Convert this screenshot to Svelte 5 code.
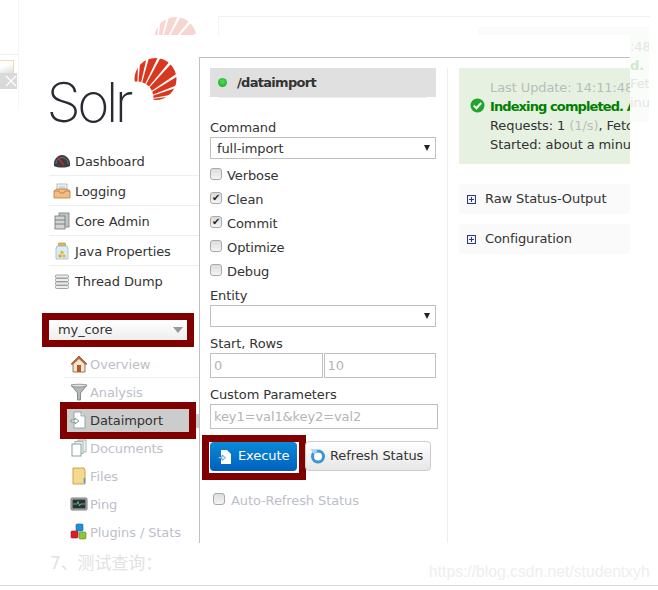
<script>
	const mainNav = [
		{ label: "Dashboard", icon: "gauge" },
		{ label: "Logging", icon: "inbox" },
		{ label: "Core Admin", icon: "servers" },
		{ label: "Java Properties", icon: "jar" },
		{ label: "Thread Dump", icon: "stack" },
	];
	const coreNav = [
		{ label: "Overview", icon: "house" },
		{ label: "Analysis", icon: "funnel" },
		{ label: "Dataimport", icon: "docarrow", active: true },
		{ label: "Documents", icon: "docs" },
		{ label: "Files", icon: "folder" },
		{ label: "Ping", icon: "monitor" },
		{ label: "Plugins / Stats", icon: "blocks" },
	];
	const options = [
		{ label: "Verbose", checked: false },
		{ label: "Clean", checked: true },
		{ label: "Commit", checked: true },
		{ label: "Optimize", checked: false },
		{ label: "Debug", checked: false },
	];

	// sun rays fan out from one point low on the left
	const rays = [87, 76, 63, 49, 33, 20, 9].map((deg) => {
		const point = (a) => {
			const r = (a * Math.PI) / 180;
			return `${137 + 52 * Math.cos(r)} ${100 - 52 * Math.sin(r)}`;
		};
		return `M137 100 L${point(deg + 1.5)} L${point(deg - 1.5)} Z`;
	});
</script>

{#snippet sun()}
	<svg class="sun" width="44" height="44" viewBox="134 56 44 44" aria-hidden="true">
		<circle cx="155.5" cy="78" r="21" fill="#d9381e" />
		<circle cx="137" cy="97" r="16.5" fill="#fff" />
		{#each rays as d}
			<path {d} fill="#fff" />
		{/each}
	</svg>
{/snippet}

{#snippet icon(name)}
	<svg class="icon" width="18" height="18" viewBox="0 0 18 18" aria-hidden="true">
		{#if name === "gauge"}
			<path d="M1 14 C0 7 5 3 9 3 C13 3 18 7 17 14 C13 16 5 16 1 14 Z" fill="#3a3d42" />
			<path d="M3 12 C3 8 6 5.5 9 5.5 C12 5.5 15 8 15 12" fill="none" stroke="#777" stroke-width="1" />
			<line x1="5" y1="6" x2="11" y2="13" stroke="#d8262c" stroke-width="1.2" />
		{:else if name === "inbox"}
			<rect x="4" y="2" width="10" height="9" fill="#eef3f6" stroke="#9fb2bf" stroke-width="0.8" />
			<line x1="6" y1="5" x2="12" y2="5" stroke="#9fb2bf" stroke-width="0.8" />
			<line x1="6" y1="7" x2="12" y2="7" stroke="#9fb2bf" stroke-width="0.8" />
			<path d="M1 9 L4 7 L14 7 L17 9 L17 16 L1 16 Z" fill="#f0bd85" stroke="#bd7a3d" stroke-width="0.8" />
			<path d="M1 9 L6 9 L7 11 L11 11 L12 9 L17 9" fill="none" stroke="#bd7a3d" stroke-width="0.8" />
		{:else if name === "servers"}
			<rect x="6" y="1" width="10" height="14" fill="#bfc4c4" stroke="#777d7d" stroke-width="0.8" />
			<rect x="2" y="4" width="10" height="13" fill="#d2d5d3" stroke="#6f7573" stroke-width="0.8" />
			<line x1="2" y1="8" x2="12" y2="8" stroke="#6f7573" stroke-width="0.9" />
			<line x1="2" y1="12" x2="12" y2="12" stroke="#6f7573" stroke-width="0.9" />
		{:else if name === "jar"}
			<rect x="5.5" y="1" width="7" height="3" rx="0.5" fill="#e0b85c" stroke="#a9893f" stroke-width="0.6" />
			<path d="M4 4 L14 4 L15 7 L15 17 L3 17 L3 7 Z" fill="#dcecf5" stroke="#9db9c9" stroke-width="0.8" />
			<circle cx="9" cy="10.5" r="1.8" fill="#e1b84f" />
			<circle cx="7" cy="14" r="1.8" fill="#d9a93c" />
			<circle cx="11" cy="14" r="1.8" fill="#e1b84f" />
		{:else if name === "stack"}
			{#each [3, 6.5, 10, 13.5] as y}
				<rect x="2.5" {y} width="13" height="3" rx="1" fill="#eceeec" stroke="#8d918e" stroke-width="0.8" />
			{/each}
		{:else if name === "house"}
			<path d="M9 1 L17 9 L15 9 L15 17 L3 17 L3 9 L1 9 Z" fill="#f2e6d3" stroke="#8a6a4c" stroke-width="0.9" />
			<path d="M9 1 L17 9 L15 9.5 L9 4 L3 9.5 L1 9 Z" fill="#b5653c" />
			<rect x="7" y="10" width="4" height="7" fill="#b8581f" />
		{:else if name === "funnel"}
			<path d="M1 2 L17 2 L10.5 10 L10.5 17 L7.5 17 L7.5 10 Z" fill="#b4b8b6" stroke="#74797a" stroke-width="0.8" />
			<ellipse cx="9" cy="2.6" rx="8" ry="1.4" fill="#dfe2e0" stroke="#74797a" stroke-width="0.6" />
		{:else if name === "docarrow"}
			<path d="M4 1 L11 1 L15 5 L15 17 L4 17 Z" fill="#fff" stroke="#87a39c" stroke-width="0.9" />
			<path d="M11 1 L11 5 L15 5" fill="#dbe7e3" stroke="#87a39c" stroke-width="0.8" />
			<path d="M1 9 L5 9 L5 7 L9 10 L5 13 L5 11 L1 11 Z" fill="#f4f7f5" stroke="#6d8a83" stroke-width="0.8" />
		{:else if name === "docs"}
			<rect x="8" y="1" width="8" height="12" fill="#eef3f1" stroke="#93a6a1" stroke-width="0.8" />
			<rect x="5" y="2.5" width="8" height="12" fill="#f3f7f5" stroke="#93a6a1" stroke-width="0.8" />
			<rect x="2" y="5" width="9" height="12" fill="#fff" stroke="#7f9791" stroke-width="0.9" />
		{:else if name === "folder"}
			<path d="M3 1 L14 1 L15 3 L15 17 L3 17 Z" fill="#f6d98f" stroke="#c49b47" stroke-width="0.9" />
			<path d="M14.5 11 L14.5 16" stroke="#4a9bd8" stroke-width="1.6" />
		{:else if name === "monitor"}
			<rect x="1" y="3" width="16" height="12" rx="1" fill="#b9bcbc" stroke="#6e7272" stroke-width="0.9" />
			<rect x="2.5" y="4.5" width="13" height="9" fill="#2c3133" />
			<path d="M3 9 L7 9 L8 6.5 L9.5 11 L10.5 9 L15 9" fill="none" stroke="#5ed0a0" stroke-width="0.8" />
		{:else if name === "blocks"}
			<rect x="6" y="1" width="7" height="7" rx="1" fill="#1e92d6" stroke="#13669b" stroke-width="0.6" />
			<rect x="1" y="8" width="7" height="7" rx="1" fill="#e0192c" stroke="#98101d" stroke-width="0.6" />
			<rect x="9" y="9" width="7" height="7" rx="1" fill="#8cc63f" stroke="#5d8a25" stroke-width="0.6" />
		{/if}
	</svg>
{/snippet}

{#snippet plus()}
	<svg width="9" height="9" viewBox="0 0 9 9" aria-hidden="true">
		<rect x="0.5" y="0.5" width="8" height="8" fill="#f2f4fa" stroke="#2c3c78" />
		<path d="M2 4.5 H7 M4.5 2 V7" stroke="#2c3c78" />
	</svg>
{/snippet}

<div class="page">
	<div class="ghost ghost-left">
		<div class="ghost-rule"></div>
		<div class="ghost-thumb"></div>
		<div class="ghost-close">
			<svg width="12" height="12" viewBox="0 0 12 12" aria-hidden="true">
				<path d="M1 1 L11 11 M11 1 L1 11" stroke="#fff" stroke-width="1.2" />
			</svg>
		</div>
	</div>
	<div class="ghost ghost-sun">{@render sun()}</div>
	<div class="ghost ghost-top"></div>
	<div class="ghost ghost-band"></div>
	<div class="ghost ghost-right">
		<span>:48</span>
		<b>d. A</b>
		<span>Fetc</span>
		<span>inut</span>
	</div>

	<div class="shot">
		<aside class="sidebar">
			<div class="logo">
				{@render sun()}
				<span class="wordmark">Solr</span>
			</div>

			<ul class="nav">
				{#each mainNav as item}
					<li>{@render icon(item.icon)}<span>{item.label}</span></li>
				{/each}
			</ul>

			<div class="core-frame marked">
				<div class="core-select">
					<span>my_core</span>
					<i class="core-arrow"></i>
				</div>
			</div>

			<ul class="nav core-nav">
				{#each coreNav as item}
					<li class:active={item.active}>
						<div class="core-item" class:marked={item.active}>
							{@render icon(item.icon)}<span>{item.label}</span>
						</div>
					</li>
				{/each}
			</ul>
		</aside>

		<main class="panel">
			<section class="form">
				<h2><i class="dot"></i>/dataimport</h2>

				<label class="field-label" for="command">Command</label>
				<div class="select-wrap">
					<select id="command"><option>full-import</option></select>
				</div>

				<div class="options">
					{#each options as opt}
						<label class="check"><input type="checkbox" checked={opt.checked} />{opt.label}</label>
					{/each}
				</div>

				<label class="field-label entity" for="entity">Entity</label>
				<div class="select-wrap">
					<select id="entity"><option></option></select>
				</div>

				<label class="field-label start" for="start">Start, Rows</label>
				<div class="rows">
					<input id="start" placeholder="0" />
					<input placeholder="10" />
				</div>

				<label class="field-label custom" for="custom">Custom Parameters</label>
				<input id="custom" class="custom-input" placeholder="key1=val1&key2=val2" />

				<div class="buttons">
					<div class="exec-frame marked">
						<button type="button" class="btn primary">
							<svg width="14" height="16" viewBox="0 0 14 16" aria-hidden="true">
								<path d="M3 1 L9 1 L13 5 L13 15 L3 15 Z" fill="#fff" />
								<path d="M0.5 8 L4 8 L4 6 L7.5 8.7 L4 11.5 L4 9.5 L0.5 9.5 Z" fill="#dbe9f5" stroke="#1b6fb8" stroke-width="0.6" />
							</svg>
							<span>Execute</span>
						</button>
					</div>
					<button type="button" class="btn refresh">
						<svg width="16" height="16" viewBox="0 0 16 16" aria-hidden="true">
							<circle cx="8" cy="8.5" r="5.5" fill="#fff" stroke="#3a94d8" stroke-width="3" />
							<path d="M0.5 1 L8 1.5 L4.5 7 Z" fill="#a8d2ef" />
						</svg>
						<span>Refresh Status</span>
					</button>
				</div>

				<label class="check auto"><input type="checkbox" />Auto-Refresh Status</label>
			</section>

			<section class="status">
				<div class="message">
					<svg class="ok" width="15" height="15" viewBox="0 0 15 15" aria-hidden="true">
						<circle cx="7.5" cy="7.5" r="7" fill="#22a52c" />
						<path d="M3.8 7.6 L6.4 10.2 L11.2 5" fill="none" stroke="#fff" stroke-width="2" />
					</svg>
					<p class="muted">Last Update: 14:11:48</p>
					<p class="done">Indexing completed. Added/Updated: 1 documents.</p>
					<p>Requests: 1 <span class="muted">(1/s)</span>, Fetched: 1 <span class="muted">(1/s)</span></p>
					<p>Started: about a minute ago</p>
				</div>

				<div class="fold">{@render plus()}<span>Raw Status-Output</span></div>
				<div class="fold">{@render plus()}<span>Configuration</span></div>
			</section>
		</main>
	</div>

	<p class="after">7、测试查询：</p>
	<span class="watermark">https://blog.csdn.net/studentxyh</span>
</div>

<style>
	:global(body) {
		margin: 0;
		background: #fff;
	}

	.page {
		position: relative;
		width: 658px;
		height: 590px;
		overflow: hidden;
		background: #fff;
		font-family: "DejaVu Sans", Verdana, sans-serif;
		font-size: 13px;
		letter-spacing: -0.1px;
		color: #333;
	}

	.ghost {
		position: absolute;
	}

	.ghost-left {
		left: 0;
		top: 0;
		width: 18px;
		height: 110px;
		border-right: 1px solid #f5f5f5;
	}

	.ghost-rule {
		position: absolute;
		left: 0;
		right: 0;
		top: 54px;
		border-top: 1px solid #eee;
	}

	.ghost-thumb {
		position: absolute;
		left: 0;
		top: 60px;
		width: 13px;
		height: 16px;
		border: 1px solid #f5d9b0;
		border-left: 0;
		background: linear-gradient(160deg, #fff 30%, #c9d6cf);
	}

	.ghost-close {
		position: absolute;
		left: 0;
		top: 73px;
		width: 17px;
		height: 16px;
		background: #d9d9d9;
		display: flex;
		align-items: center;
		justify-content: flex-end;
	}

	.ghost-sun {
		left: 154px;
		top: 16px;
		height: 19px;
		overflow: hidden;
		opacity: 0.2;
	}

	.ghost-top {
		left: 218px;
		top: 16px;
		width: 431px;
		height: 19px;
		border-top: 1px solid #f0f0f0;
		border-left: 1px solid #f5f5f5;
	}

	.ghost-band {
		left: 478px;
		top: 27px;
		width: 171px;
		height: 8px;
		background: #fafcf9;
	}

	.ghost-right {
		left: 630px;
		top: 27px;
		width: 19px;
		height: 95px;
		background: #fafcf9;
		overflow: hidden;
		white-space: nowrap;
		color: #e4e4e4;
		display: flex;
		flex-direction: column;
		padding-top: 11px;
		line-height: 18.6px;
		box-sizing: border-box;
	}

	.ghost-right b {
		color: #d0e8cc;
	}

	.shot {
		display: flex;
		padding: 57px 0 0 49px;
	}

	.sidebar {
		width: 150px;
		flex: none;
	}

	.logo {
		position: relative;
		height: 89px;
	}

	.wordmark {
		position: absolute;
		left: -2.5px;
		top: 12px;
		font-family: Inter, Lato, sans-serif;
		font-weight: 200;
		font-size: 55px;
		line-height: 66px;
		letter-spacing: -3.5px;
		color: #2b2a33;
	}

	.logo .sun {
		position: absolute;
		left: 85px;
		top: 0;
	}

	.sun {
		display: block;
	}

	.nav {
		list-style: none;
		margin: 0;
		padding: 0;
	}

	.nav li {
		height: 30px;
		display: flex;
		align-items: center;
		gap: 4px;
		padding-left: 4px;
		border-bottom: 1px solid #eee;
		box-sizing: border-box;
	}

	.nav li:last-child {
		border-bottom-color: transparent;
	}

	.nav li span {
		position: relative;
		top: 1px;
	}

	.icon {
		flex: none;
	}

	.core-frame {
		margin-top: 24px;
		width: 138px;
		height: 20px;
	}

	.core-select {
		height: 100%;
		box-sizing: border-box;
		display: flex;
		align-items: center;
		justify-content: space-between;
		padding: 0 2px 2px 9px;
		border-radius: 3px;
		background: linear-gradient(#fff, #eee);
	}

	.core-arrow {
		width: 0;
		height: 0;
		margin: 2px 2px 0 0;
		border: 5px solid transparent;
		border-top: 6px solid #999;
		border-bottom: 0;
	}

	.marked {
		outline: 7px solid #800000;
	}

	.core-nav {
		margin: 10px 0 0 15px;
	}

	.core-nav li {
		position: relative;
		height: 28px;
		color: #bcc0c8;
		padding-left: 0;
		border-bottom: 0;
	}

	.core-nav li span {
		top: 0;
	}

	.core-nav li:first-child {
		border-bottom: 1px solid #eee;
	}

	.core-nav li:first-child span {
		top: 1px;
	}

	.core-item {
		display: flex;
		align-items: center;
		gap: 2px;
		width: 100%;
		height: 23px;
		box-sizing: border-box;
		padding-left: 6px;
	}

	.core-nav li.active {
		color: #333;
	}

	.core-nav li.active .core-item {
		width: 122px;
		margin-left: 3px;
		flex: none;
		padding-left: 3px;
		background: #ccc;
	}

	.core-nav li.active::after {
		content: "";
		position: absolute;
		right: 0;
		top: 8px;
		bottom: 6px;
		width: 3px;
		background: #ccc;
	}

	.panel {
		width: 431px;
		height: 486px;
		flex: none;
		box-sizing: border-box;
		display: flex;
		padding: 10px 0 0 10px;
		border-top: 1px solid #c0c0c0;
		border-left: 1px solid #c0c0c0;
		background: #fff;
	}

	.form {
		width: 238px;
		height: 100%;
		flex: none;
		box-sizing: border-box;
		padding-right: 11px;
		border-right: 1px solid #eee;
		display: flex;
		flex-direction: column;
	}

	h2 {
		margin: 0;
		height: 29px;
		background: #e0e0e0;
		display: flex;
		align-items: center;
		font-size: 13px;
		letter-spacing: -0.7px;
		color: #333;
		box-shadow: 0 10px 0 -9px #eee;
	}

	.dot {
		width: 9px;
		height: 9px;
		margin: 0 10px 0 8px;
		border-radius: 50%;
		background: radial-gradient(circle at 50% 40%, #4fdc55, #16a01e);
	}

	.field-label {
		height: 15px;
		line-height: 15px;
	}

	h2 + .field-label {
		margin-top: 23px;
	}

	.select-wrap {
		position: relative;
		margin-top: 2px;
	}

	.select-wrap::after {
		content: "";
		position: absolute;
		right: 6px;
		top: 8px;
		border: 3.5px solid transparent;
		border-top: 6px solid #222;
		border-bottom: 0;
	}

	select {
		appearance: none;
		display: block;
		width: 100%;
		height: 22px;
		padding: 0 6px;
		box-sizing: border-box;
		border: 1px solid #c0c0c0;
		border-radius: 0;
		background: #fff;
		font: inherit;
		letter-spacing: inherit;
		color: #333;
	}

	.options {
		margin-top: 5px;
		display: flex;
		flex-direction: column;
	}

	.check {
		height: 24px;
		display: flex;
		align-items: center;
		gap: 5px;
		line-height: 24px;
	}

	input[type="checkbox"] {
		appearance: none;
		position: relative;
		top: -2px;
		width: 12px;
		height: 12px;
		margin: 0;
		border: 1px solid #a9a9a9;
		border-radius: 3px;
		background: linear-gradient(#dcdcdc, #f5f5f5);
		flex: none;
	}

	input[type="checkbox"]:checked::after {
		content: "✔";
		position: absolute;
		left: 1px;
		top: -2px;
		font-size: 10px;
		line-height: 13px;
		color: #222;
	}

	.entity {
		margin-top: 4px;
	}

	.start {
		margin-top: 9px;
	}

	.rows {
		display: flex;
		gap: 1px;
		margin-top: 2px;
	}

	.rows input,
	.custom-input {
		height: 25px;
		min-width: 0;
		flex: 1;
		box-sizing: border-box;
		padding: 0 3px;
		border: 1px solid #c0c0c0;
		font: inherit;
		letter-spacing: inherit;
		outline: none;
	}

	input::placeholder {
		color: #b5b5b5;
		opacity: 1;
	}

	.custom {
		margin-top: 9px;
	}

	.custom-input {
		flex: none;
		width: 228px;
		margin-top: 2px;
	}

	.buttons {
		display: flex;
		align-items: flex-start;
		gap: 6px;
		margin-top: 12px;
	}

	.exec-frame {
		width: 90px;
		height: 31px;
		margin: 1px 0 0 -1px;
		padding-left: 1px;
		box-sizing: border-box;
	}

	.btn {
		height: 30px;
		display: flex;
		align-items: center;
		box-sizing: border-box;
		border: 1px solid #ccc;
		border-radius: 4px;
		background: linear-gradient(#fff, #e6e6e6);
		font: inherit;
		letter-spacing: inherit;
		color: #333;
	}

	.btn span {
		position: relative;
		top: -1px;
	}

	.refresh {
		width: 126px;
		gap: 4px;
		padding: 0 0 0 4px;
		flex: none;
	}

	.primary {
		width: 87px;
		height: 29px;
		padding: 0 0 0 8px;
		gap: 6px;
		border: 0;
		color: #fff;
		background: linear-gradient(#0a8ad8, #0060bd);
	}

	.auto {
		margin: 16px 0 0 3px;
		gap: 6px;
		color: #bcc0c8;
	}

	.status {
		width: 171px;
		margin-left: 11px;
		flex: none;
		display: flex;
		flex-direction: column;
	}

	.message {
		position: relative;
		height: 96px;
		padding: 10px 0 0 31px;
		box-sizing: border-box;
		background: #e6f1e1;
		overflow: hidden;
		white-space: nowrap;
	}

	.message p {
		margin: 0;
		line-height: 19px;
	}

	.ok {
		position: absolute;
		left: 11px;
		top: 30px;
	}

	.muted {
		color: #b9bdb9;
	}

	.done {
		color: #008000;
		font-weight: 700;
		letter-spacing: -0.9px;
	}

	.fold {
		height: 30px;
		margin-top: 10px;
		display: flex;
		align-items: center;
		gap: 9px;
		padding-left: 8px;
		background: #fafafa;
	}

	.fold span {
		position: relative;
		top: -1px;
	}

	.message + .fold {
		margin-top: 20px;
	}

	.after {
		position: absolute;
		left: 50px;
		top: 553px;
		margin: 0;
		font-family: "DejaVu Sans", "Noto Sans CJK SC", sans-serif;
		font-size: 17px;
		line-height: 20px;
		color: #e2e2e2;
	}

	.watermark {
		position: absolute;
		left: 429px;
		top: 562px;
		font-family: "Liberation Sans", Arial, sans-serif;
		font-size: 15.7px;
		letter-spacing: 0;
		line-height: 20px;
		color: #eee;
	}

	.page::after {
		content: "";
		position: absolute;
		left: 0;
		right: 0;
		top: 585px;
		border-top: 1px solid #d8d8d8;
	}
</style>
